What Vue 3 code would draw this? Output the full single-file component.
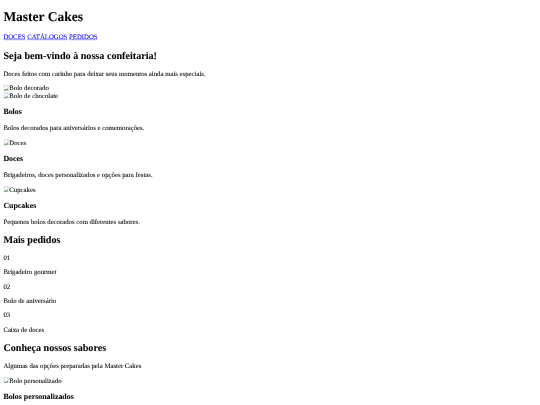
<template>
  <div class="frame">
    <div class="page">
      <header>
        <h1>Master Cakes</h1>
        <nav>
          <a v-for="link in links" :key="link" href="#">{{ link }}</a>
        </nav>
      </header>

      <section>
        <h2>Seja bem-vindo à nossa confeitaria!</h2>
        <p>Doces feitos com carinho para deixar seus momentos ainda mais especiais.</p>
        <div>
          <span v-for="alt in heroImages" :key="alt" class="broken">
            <svg class="brokenIcon" viewBox="0 0 16 16"><path d="M1.500 1.500h9l4 4v3l-3 2-2-1-4 3-1-1-3 2z" fill="#f4f7fb" stroke="#b8b8b8" /><path d="M10.500 1.500v4h4" fill="#fff" stroke="#b8b8b8" /><path d="M1 15l3-4 2.500 2 3-3.500 2 2-3 3.500z" fill="#57a64a" /><path d="M3 14.500h8l3-3" fill="none" stroke="#b8b8b8" /></svg>{{ alt }}
          </span>
        </div>
      </section>

      <section v-for="cat in categories" :key="cat.title">
        <span v-if="cat.img" class="broken">
          <svg class="brokenIcon" viewBox="0 0 16 16"><path d="M1.500 1.500h9l4 4v3l-3 2-2-1-4 3-1-1-3 2z" fill="#f4f7fb" stroke="#b8b8b8" /><path d="M10.500 1.500v4h4" fill="#fff" stroke="#b8b8b8" /><path d="M1 15l3-4 2.500 2 3-3.500 2 2-3 3.500z" fill="#57a64a" /><path d="M3 14.500h8l3-3" fill="none" stroke="#b8b8b8" /></svg>{{ cat.img }}
        </span>
        <h3>{{ cat.title }}</h3>
        <p>{{ cat.text }}</p>
      </section>

      <section>
        <h2>Mais pedidos</h2>
        <template v-for="item in orders" :key="item.num">
          <p>{{ item.num }}</p>
          <p>{{ item.name }}</p>
        </template>
      </section>

      <section>
        <h2>Conheça nossos sabores</h2>
        <p>Algumas das opções preparadas pela Master Cakes</p>
        <span class="broken">
          <svg class="brokenIcon" viewBox="0 0 16 16"><path d="M1.500 1.500h9l4 4v3l-3 2-2-1-4 3-1-1-3 2z" fill="#f4f7fb" stroke="#b8b8b8" /><path d="M10.500 1.500v4h4" fill="#fff" stroke="#b8b8b8" /><path d="M1 15l3-4 2.500 2 3-3.500 2 2-3 3.500z" fill="#57a64a" /><path d="M3 14.500h8l3-3" fill="none" stroke="#b8b8b8" /></svg>Bolo personalizado
        </span>
        <h3>Bolos personalizados</h3>
      </section>
    </div>
  </div>
</template>

<script setup>
const links = ['DOCES', 'CATÁLOGOS', 'PEDIDOS']
const heroImages = ['Bolo decorado', 'Bolo de chocolate']
const categories = [
  { title: 'Bolos', text: 'Bolos decorados para aniversários e comemorações.' },
  { img: 'Doces', title: 'Doces', text: 'Brigadeiros, doces personalizados e opções para festas.' },
  { img: 'Cupcakes', title: 'Cupcakes', text: 'Pequenos bolos decorados com diferentes sabores.' }
]
const orders = [
  { num: '01', name: 'Brigadeiro gourmet' },
  { num: '02', name: 'Bolo de aniversário' },
  { num: '03', name: 'Caixa de doces' }
]
</script>

<style scoped>
/* the reference is a 1280x960 page shrunk down to 540x405 */
.frame {
  width: 540px;
  height: 405px;
  overflow: hidden;
}

.page {
  width: 1280px;
  height: 960px;
  overflow: hidden;
  padding: 0 8px;
  box-sizing: border-box;
  font-family: "Liberation Serif", serif;
  font-size: 16px;
  line-height: 18px;
  color: #000;
  transform: scale(0.421875);
  transform-origin: 0 0;
  text-rendering: geometricPrecision;
  -webkit-text-stroke: 0.15px currentColor;
  filter: blur(0.7px);
}

h1 {
  margin: 21.44px 0;
  font-size: 32px;
  line-height: 37px;
}

nav a {
  color: #00e;
  margin-right: 4px;
}

h2 {
  margin: 19.92px 0;
  font-size: 24px;
  line-height: 28px;
}

h3 {
  margin: 18.72px 0;
  font-size: 18.72px;
  line-height: 21px;
}

p {
  margin: 16px 0;
}

.broken {
  display: block;
  height: 18.5px;
}

.brokenIcon {
  width: 16px;
  height: 16px;
  vertical-align: -2px;
  margin-right: -2px;
}
</style>
